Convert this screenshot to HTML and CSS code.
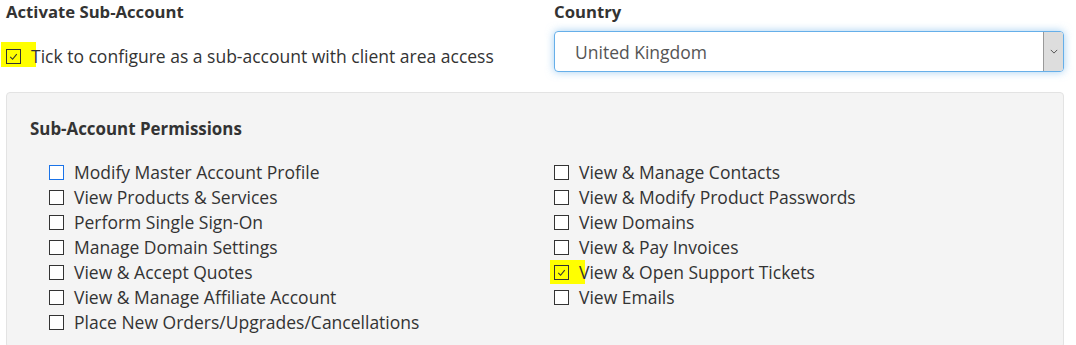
FILE: index.html
```html
<!DOCTYPE html>
<html lang="en">
<head>
  <meta charset="UTF-8" />
  <title>Sub-Account</title>
  <link rel="stylesheet" href="styles.css">
</head>
<body>
  <div class="page">
    <div class="top-row">
      <div class="field">
        <label class="field-label">Activate Sub-Account</label>
        <label class="check-line">
          <span class="mark"><span class="box checked"><svg viewBox="0 0 14 14"><polyline points="3.5,7.5 6,10 10.5,4.5" /></svg></span></span>
          Tick to configure as a sub-account with client area access
        </label>
      </div>
      <div class="field">
        <label class="field-label">Country</label>
        <div class="select">
          <span class="select-value">United Kingdom</span>
          <span class="select-arrow"><svg viewBox="0 0 10 6"><polyline points="1,1 5,5 9,1" /></svg></span>
        </div>
      </div>
    </div>

    <div class="panel">
      <h4>Sub-Account Permissions</h4>
      <div class="perms">
        <ul class="perm-col">
          <li><span class="box focus"></span>Modify Master Account Profile</li>
          <li><span class="box"></span>View Products &amp; Services</li>
          <li><span class="box"></span>Perform Single Sign-On</li>
          <li><span class="box"></span>Manage Domain Settings</li>
          <li><span class="box"></span>View &amp; Accept Quotes</li>
          <li><span class="box"></span>View &amp; Manage Affiliate Account</li>
          <li><span class="box"></span>Place New Orders/Upgrades/Cancellations</li>
        </ul>
        <ul class="perm-col">
          <li><span class="box"></span>View &amp; Manage Contacts</li>
          <li><span class="box"></span>View &amp; Modify Product Passwords</li>
          <li><span class="box"></span>View Domains</li>
          <li><span class="box"></span>View &amp; Pay Invoices</li>
          <li><span class="mark"><span class="box checked"><svg viewBox="0 0 14 14"><polyline points="3.5,7.5 6,10 10.5,4.5" /></svg></span></span>View &amp; Open Support Tickets</li>
          <li><span class="box"></span>View Emails</li>
        </ul>
      </div>
    </div>
  </div>
</body>
</html>
```

FILE: styles.css
```css
body {
  margin: 0;
  font-family: "Open Sans", sans-serif;
  color: #333;
  background: #fff;
  overflow: hidden;
}
.page {
  padding: 0 12px 0 6px;
  width: 1058px;
}
.top-row {
  display: grid;
  grid-template-columns: 548px 510px;
}
.field-label {
  display: block;
  font-weight: 700;
  font-size: 16.7px;
  line-height: 24px;
}
.check-line {
  display: flex;
  align-items: center;
  font-size: 17.5px;
  line-height: 24px;
  margin-top: 20px;
  gap: 10px;
}
.box {
  display: inline-block;
  box-sizing: border-box;
  width: 15px;
  height: 15px;
  border: 1.5px solid #333;
  background: #fff;
  flex: none;
}
.box svg {
  display: block;
  width: 100%;
  height: 100%;
}
.box polyline {
  fill: none;
  stroke: #333;
  stroke-width: 1.2;
}
.box.checked {
  background: transparent;
}
.box.focus {
  border-color: #1a73e8;
}
.mark {
  display: inline-flex;
  background: #ffff00;
  padding: 5px 16px 4px 4px;
  margin: -5px -16px -4px -4px;
}
.check-line .mark {
  padding: 7px 15px 3px 5px;
  margin: -7px -15px -3px -5px;
}
.select {
  display: flex;
  align-items: stretch;
  margin-top: 7px;
  height: 41px;
  box-sizing: border-box;
  border: 1px solid #66afe9;
  border-radius: 4px;
  box-shadow: 0 0 8px rgba(102, 175, 233, 0.6);
  overflow: hidden;
}
.select-value {
  flex: 1;
  display: flex;
  align-items: center;
  padding-left: 20px;
  font-size: 17.5px;
  color: #555;
}
.select-arrow {
  width: 19px;
  display: flex;
  align-items: center;
  justify-content: center;
  background: #ddd;
  border-left: 1px solid #999;
}
.select-arrow svg {
  width: 8px;
  height: 5px;
}
.select-arrow polyline {
  fill: none;
  stroke: #333;
  stroke-width: 1;
}
.panel {
  margin-top: 20px;
  background: #f4f4f4;
  border: 1px solid #e3e3e3;
  border-radius: 4px;
  padding: 24px 23px 12px;
}
.panel h4 {
  margin: 0;
  font-size: 16.9px;
  line-height: 24px;
  font-weight: 700;
}
.perms {
  display: grid;
  grid-template-columns: 505px 1fr;
  padding-left: 19px;
  margin-top: 19px;
}
.perm-col {
  list-style: none;
  margin: 0;
  padding: 0;
}
.perm-col li {
  display: flex;
  align-items: center;
  gap: 10px;
  font-size: 17.5px;
  line-height: 25px;
}
```
